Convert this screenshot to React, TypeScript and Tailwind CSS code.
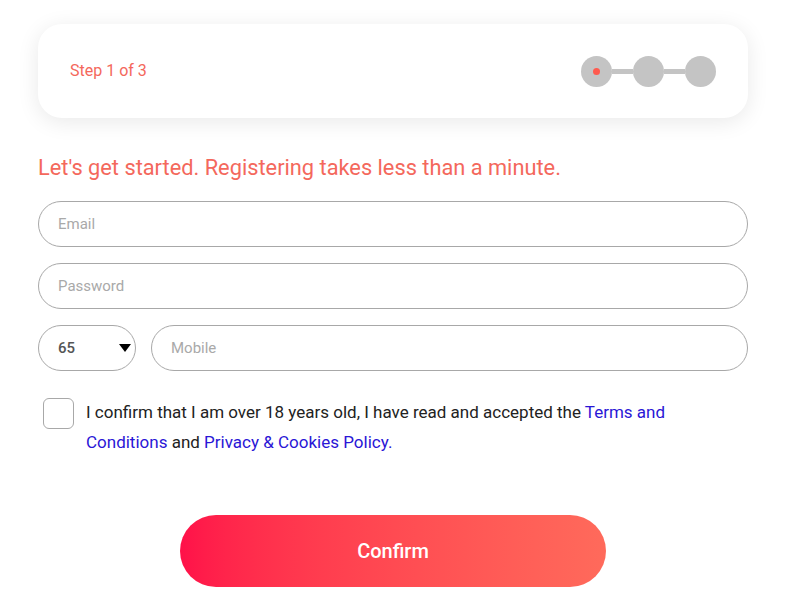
import { useState } from "react";

function Stepper() {
  return (
    <div className="flex items-center">
      <div className="w-[31px] h-[31px] rounded-full bg-[#c4c4c4] flex items-center justify-center">
        <div className="w-[7px] h-[7px] rounded-full bg-[#ff5a4e]" />
      </div>
      <div className="w-[21px] h-[5px] bg-[#c4c4c4]" />
      <div className="w-[31px] h-[31px] rounded-full bg-[#c4c4c4]" />
      <div className="w-[21px] h-[5px] bg-[#c4c4c4]" />
      <div className="w-[31px] h-[31px] rounded-full bg-[#c4c4c4]" />
    </div>
  );
}

export default function App() {
  const [agreed, setAgreed] = useState(false);

  return (
    <div className="w-[799px] h-[613px] bg-white font-['Roboto',sans-serif] overflow-hidden">
      <div className="w-[710px] ml-[38px] pt-[24px]">
        {/* Step card */}
        <div className="h-[94px] rounded-[24px] bg-white shadow-[0_4px_22px_rgba(0,0,0,0.09)] flex items-center justify-between pl-[32px] pr-[32px]">
          <span className="text-[16px] text-[#f4685c]">Step 1 of 3</span>
          <Stepper />
        </div>

        <h2 className="mt-[37px] text-[21.8px] leading-[26px] text-[#f4685c]">
          Let's get started. Registering takes less than a minute.
        </h2>

        {/* Fields */}
        <div className="mt-[20px] flex flex-col gap-[16px]">
          <input
            placeholder="Email"
            className="h-[46px] w-full rounded-full border border-[#a8a8a8] px-[19px] text-[15px] placeholder:text-[#a9a9a9] outline-none"
          />
          <input
            placeholder="Password"
            type="password"
            className="h-[46px] w-full rounded-full border border-[#a8a8a8] px-[19px] text-[15px] placeholder:text-[#a9a9a9] outline-none"
          />
          <div className="flex gap-[15px]">
            <div className="h-[46px] w-[98px] shrink-0 rounded-full border border-[#a8a8a8] flex items-center justify-between pl-[19px] pr-[4px]">
              <span className="text-[15px] font-medium text-[#555]">65</span>
              <svg width="12" height="8" viewBox="0 0 12 8">
                <path d="M0 0 H12 L6 8 Z" fill="#000" />
              </svg>
            </div>
            <input
              placeholder="Mobile"
              className="h-[46px] flex-1 rounded-full border border-[#a8a8a8] px-[19px] text-[15px] placeholder:text-[#a9a9a9] outline-none"
            />
          </div>
        </div>

        {/* Terms */}
        <div className="mt-[27px] flex items-start pl-[5px]">
          <button
            onClick={() => setAgreed(!agreed)}
            className="w-[31px] h-[31px] shrink-0 rounded-[6px] border border-[#a8a8a8] bg-white"
          />
          <p className="ml-[12px] w-[620px] text-[17px] leading-[30px] text-[#222] -mt-[1px]">
            I confirm that I am over 18 years old, I have read and accepted the{" "}
            <a className="text-[#2a16d6]">Terms and Conditions</a> and{" "}
            <a className="text-[#2a16d6]">Privacy &amp; Cookies Policy.</a>
          </p>
        </div>

        {/* Confirm */}
        <div className="mt-[58px] flex justify-center">
          <button className="w-[426px] h-[72px] rounded-full bg-gradient-to-r from-[#ff1049] to-[#ff6a5b] text-white text-[20px] font-medium">
            Confirm
          </button>
        </div>
      </div>
    </div>
  );
}
